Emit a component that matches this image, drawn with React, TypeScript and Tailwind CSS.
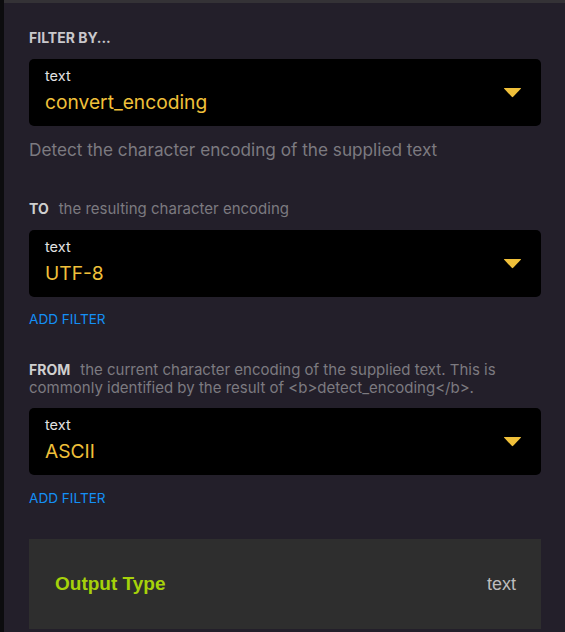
import { ReactNode } from "react"

const inter = { fontFamily: "Inter, 'Noto Sans', sans-serif" }

function Caret() {
  return (
    <svg width="19" height="11" viewBox="0 0 19 11">
      <path d="M1.5 1 L17.5 1 Q18.5 1 17.8 1.8 L10.2 9.8 Q9.5 10.5 8.8 9.8 L1.2 1.8 Q0.5 1 1.5 1 Z" fill="#f0c03a" />
    </svg>
  )
}

function SelectBox({ value }: { value: string }) {
  return (
    <div className="h-[67px] w-full rounded-[5px] bg-black flex justify-between pl-[16px] pr-[19px]">
      <div className="flex flex-col pt-[8px]">
        <span className="text-[14.5px] leading-[17px] text-[#e2e2e2]">text</span>
        <span className="mt-[6px] text-[19.2px] leading-[24px] text-[#f0c03a]">{value}</span>
      </div>
      <div className="self-center">
        <Caret />
      </div>
    </div>
  )
}

function Field({ name, desc, children }: { name: string; desc: ReactNode; children: ReactNode }) {
  return (
    <div className="flex flex-col">
      <p className="text-[15px] leading-[18px] text-[#7c7a80]">
        <span className="text-[14px] font-bold text-[#cfcfcf] mr-[10px]">{name}</span>
        {desc}
      </p>
      {children}
    </div>
  )
}

export default function App() {
  return (
    <div className="w-[565px] h-[632px] bg-[#231f2a] flex overflow-hidden" style={inter}>
      <div className="w-[4px] h-full bg-[#0c0c0e]" />
      <div className="flex-1 flex flex-col">
        <div className="h-[3px] bg-[#343236]" />
        <div className="flex flex-col pl-[25px] pr-[24px]">
          <h3 className="mt-[26px] text-[14px] leading-[18px] font-bold text-[#c9c8cc]">FILTER BY...</h3>
          <div className="mt-[12px]">
            <SelectBox value="convert_encoding" />
          </div>
          <p className="mt-[13px] text-[17.2px] leading-[22px] text-[#7c7a80]">Detect the character encoding of the supplied text</p>

          <div className="mt-[39px]">
            <Field name="TO" desc="the resulting character encoding">
              <div className="mt-[12px]">
                <SelectBox value="UTF-8" />
              </div>
            </Field>
          </div>
          <button className="self-start mt-[14px] text-[13.6px] leading-[16px] text-[#1490f5]">ADD FILTER</button>

          <div className="mt-[34px]">
            <Field
              name="FROM"
              desc="the current character encoding of the supplied text. This is commonly identified by the result of <b>detect_encoding</b>."
            >
              <div className="mt-[11px]">
                <SelectBox value="ASCII" />
              </div>
            </Field>
          </div>
          <button className="self-start mt-[15px] text-[13.6px] leading-[16px] text-[#1490f5]">ADD FILTER</button>

          <div
            className="mt-[33px] h-[90px] bg-[#2e2e2e] flex items-center justify-between pl-[26px] pr-[25px]"
            style={{ fontFamily: "'Liberation Sans', Arial, sans-serif" }}
          >
            <span className="text-[19px] font-bold text-[#a6d20a]">Output Type</span>
            <span className="text-[18px] text-[#bdbdbd]">text</span>
          </div>
        </div>
      </div>
    </div>
  )
}
